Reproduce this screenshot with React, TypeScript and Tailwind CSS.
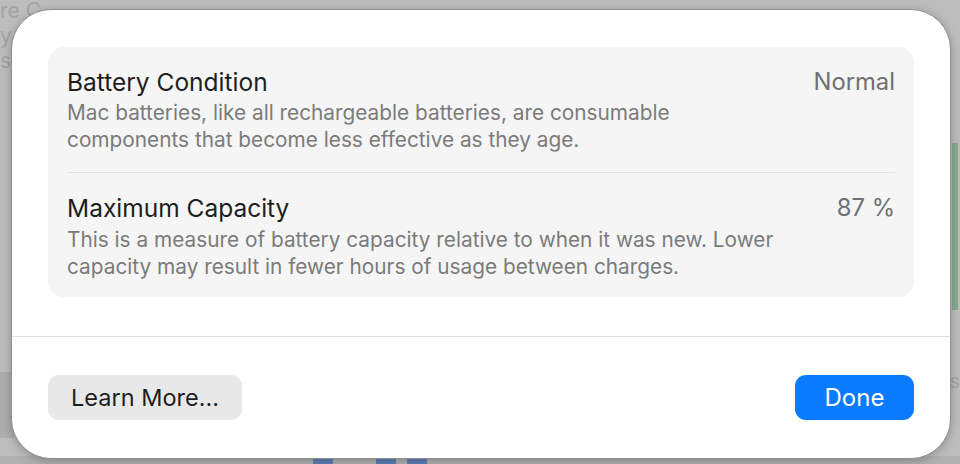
import React from 'react';

interface InfoRow {
    title: string;
    value: string;
    description: string[];
}

const rows: InfoRow[] = [
    {
        title: 'Battery Condition',
        value: 'Normal',
        description: [
            'Mac batteries, like all rechargeable batteries, are consumable',
            'components that become less effective as they age.',
        ],
    },
    {
        title: 'Maximum Capacity',
        value: '87 %',
        description: [
            'This is a measure of battery capacity relative to when it was new. Lower',
            'capacity may result in fewer hours of usage between charges.',
        ],
    },
];

const Backdrop: React.FC = () => (
    <>
        {/* faded window behind the sheet */}
        <div className="absolute left-0 top-[-2px] text-[21px] leading-[25px] text-[#a3a3a3]">
            <div>re C</div>
            <div>y</div>
            <div>s</div>
        </div>
        <div className="absolute left-0 top-[372px] h-[66px] w-[14px] bg-[#adadad]" />
        <div className="absolute right-[2px] top-[143px] h-[167px] w-[6px] bg-[#86ab8e]" />
        <div className="absolute right-0 top-[366px] text-[20px] text-[#a5a5a5]">s</div>
        <div className="absolute bottom-0 left-0 h-[8px] w-full bg-[#b0b0b0]" />
        <div className="absolute bottom-0 left-[313px] h-[6px] w-[20px] bg-[#5d7fb5]" />
        <div className="absolute bottom-0 left-[376px] h-[6px] w-[20px] bg-[#5d7fb5]" />
        <div className="absolute bottom-0 left-[407px] h-[6px] w-[20px] bg-[#5d7fb5]" />
    </>
);

export default function App() {
    return (
        <div
            className="relative h-[464px] w-[960px] overflow-hidden bg-[#bdbdbd] pl-[11px] pt-[9px]"
            style={{ fontFamily: 'Inter, "Noto Sans", sans-serif' }}
        >
            <Backdrop />

            <div className="relative flex h-[450px] w-[940px] flex-col rounded-[40px] border border-[#8f8f8f] bg-white shadow-[0_2px_10px_rgba(0,0,0,0.25)]">
                <div className="px-[36px] pt-[37px]">
                    <div className="rounded-[16px] bg-[#f5f5f5] px-[19px]">
                        {rows.map((row, i) => (
                            <div
                                key={row.title}
                                className={`flex justify-between ${i === 0
                                    ? 'border-b border-[#e2e2e2] pb-[19px] pt-[21px]'
                                    : 'pb-[17px] pt-[21px]'
                                    }`}
                            >
                                <div>
                                    <div className="text-[24.5px] leading-[28px] text-[#1e1e1e]">
                                        {row.title}
                                    </div>
                                    <div
                                        className={`text-[20.8px] leading-[27px] text-[#7b7b7b] ${i === 0 ? 'mt-[3px]' : 'mt-[4px]'
                                            }`}
                                    >
                                        {row.description.map((line) => (
                                            <div key={line}>{line}</div>
                                        ))}
                                    </div>
                                </div>
                                <div className="text-[23.8px] leading-[28px] text-[#707070]">
                                    {row.value}
                                </div>
                            </div>
                        ))}
                    </div>
                </div>

                <div className="mt-[39px] h-px bg-[#dedede]" />

                <div className="flex items-center justify-between px-[36px] pt-[38px]">
                    <button className="h-[45px] w-[194px] rounded-[11px] bg-[#e8e8e8] text-[23.5px] text-[#1e1e1e]">
                        Learn More...
                    </button>
                    <button className="h-[45px] w-[119px] rounded-[11px] bg-[#0a7bff] text-[24px] text-white">
                        Done
                    </button>
                </div>
            </div>
        </div>
    );
}
